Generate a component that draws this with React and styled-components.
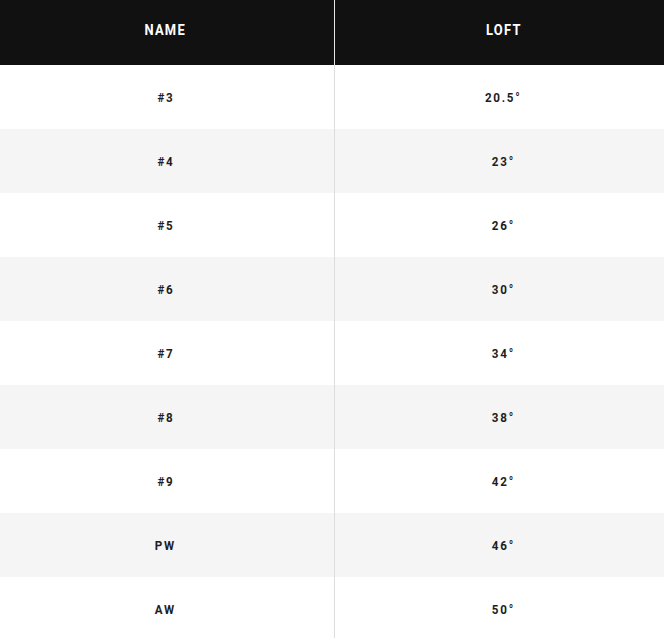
import React from 'react';
import styled, { createGlobalStyle } from 'styled-components';

const GlobalStyle = createGlobalStyle`
  html, body {
    margin: 0;
    padding: 0;
    background: #ffffff;
    overflow: hidden;
  }
`;

const lofts = [
  { name: '#3', loft: '20.5°' },
  { name: '#4', loft: '23°' },
  { name: '#5', loft: '26°' },
  { name: '#6', loft: '30°' },
  { name: '#7', loft: '34°' },
  { name: '#8', loft: '38°' },
  { name: '#9', loft: '42°' },
  { name: 'PW', loft: '46°' },
  { name: 'AW', loft: '50°' },
];

const Table = styled.div`
  width: 672px;
  font-family: "Roboto", "Liberation Sans", sans-serif;
`;

const Row = styled.div`
  display: grid;
  grid-template-columns: 331px 4px 1fr;
  height: ${({ head }) => (head ? '65px' : '64px')};
  background: ${({ head, shaded }) => (head ? '#111111' : shaded ? '#f5f5f5' : '#ffffff')};
`;

const Cell = styled.div`
  display: flex;
  align-items: center;
  justify-content: center;
  padding-bottom: ${({ head }) => (head ? '6px' : '0')};
`;

const Gap = styled.div`
  border-right: 1px solid ${({ head }) => (head ? '#e6e6e6' : '#dddddd')};
`;

const Label = styled.span`
  display: inline-block;
  font-weight: 700;
  font-size: ${({ head }) => (head ? '15px' : '13.5px')};
  letter-spacing: ${({ head }) => (head ? '1.5px' : '2px')};
  color: ${({ head }) => (head ? '#ffffff' : '#1e1e1e')};
  transform: scaleX(0.86);
`;

export default function App() {
  return (
    <>
      <GlobalStyle />
      <Table>
        <Row head>
          <Cell head><Label head>NAME</Label></Cell>
          <Gap head />
          <Cell head><Label head>LOFT</Label></Cell>
        </Row>
        {lofts.map((item, i) => (
          <Row key={item.name} shaded={i % 2 === 1}>
            <Cell><Label>{item.name}</Label></Cell>
            <Gap />
            <Cell><Label>{item.loft}</Label></Cell>
          </Row>
        ))}
      </Table>
    </>
  );
}
